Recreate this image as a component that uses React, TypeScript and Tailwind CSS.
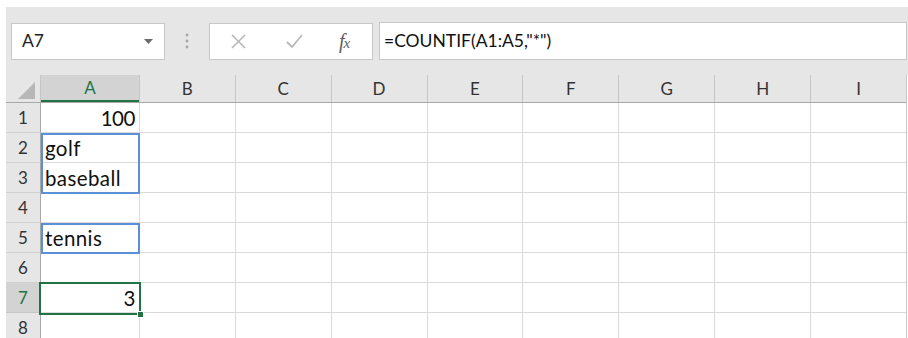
import React from 'react';

const COLS = ['B', 'C', 'D', 'E', 'F', 'G', 'H', 'I'];
const ROWS = [1, 2, 3, 4, 5, 6, 7, 8];

const CELL_A: Record<number, { text: string; right?: boolean }> = {
  1: { text: '100', right: true },
  2: { text: 'golf' },
  3: { text: 'baseball' },
  5: { text: 'tennis' },
  7: { text: '3', right: true },
};

const FONT = { fontFamily: 'Lato, "Open Sans", sans-serif' };

export default function App() {
  return (
    <div className="w-[908px] h-[338px] bg-white overflow-hidden pt-[7px] pl-[6px]" style={FONT}>
      {/* Formula bar */}
      <div className="h-[68px] w-[902px] bg-[#e6e6e6] flex items-center pl-[5px]">
        <div className="w-[154px] h-[37px] bg-white border border-[#c8c8c8] flex items-center justify-between pl-[10px] pr-[11px]">
          <span className="text-[17.5px] text-[#222]">A7</span>
          <svg width="9" height="5" viewBox="0 0 9 5">
            <path d="M0 0h9L4.5 5z" fill="#6a6a6a" />
          </svg>
        </div>
        <div className="w-[44px] flex justify-center">
          <svg width="4" height="16" viewBox="0 0 4 16">
            <circle cx="2" cy="2" r="1.4" fill="#a6a6a6" />
            <circle cx="2" cy="8" r="1.4" fill="#a6a6a6" />
            <circle cx="2" cy="14" r="1.4" fill="#a6a6a6" />
          </svg>
        </div>
        <div className="w-[164px] h-[37px] bg-white border border-[#c8c8c8] flex items-center">
          <svg className="ml-[21px]" width="15" height="15" viewBox="0 0 15 15">
            <path d="M1 1l13 13M14 1L1 14" stroke="#b8b8b8" strokeWidth="1.6" fill="none" />
          </svg>
          <svg className="ml-[40px]" width="17" height="15" viewBox="0 0 17 15">
            <path d="M1 8l5 5L16 1" stroke="#b8b8b8" strokeWidth="1.8" fill="none" />
          </svg>
          <span
            className="ml-[36px] text-[20px] italic text-[#5e5e5e] tracking-[-1px] leading-none"
            style={{ fontFamily: '"Liberation Serif", serif' }}
          >
            f<span className="text-[15px]">x</span>
          </span>
        </div>
        <div className="ml-[6px] w-[528px] h-[38px] bg-white border border-[#c8c8c8] flex items-center pl-[4px]">
          <span className="text-[17.5px] text-[#111]">=COUNTIF(A1:A5,"*")</span>
        </div>
      </div>

      {/* Grid */}
      <div className="relative w-[901px] border-r border-[#c8c8c8]">
        {/* Column headers */}
        <div className="flex h-[28px] bg-[#e6e6e6] border-b border-[#a8a8a8]">
          <div className="w-[35px] flex items-end justify-end pr-[5px] pb-[3px] border-r border-[#c6c6c6]">
            <svg width="17" height="17" viewBox="0 0 17 17">
              <path d="M17 0v17H0z" fill="#b7b7b7" />
            </svg>
          </div>
          <div className="w-[98px] flex items-center justify-center bg-[#d3d3d3] border-b-2 border-[#217346] text-[17px] text-[#217346]">
            A
          </div>
          {COLS.map((c) => (
            <div
              key={c}
              className="w-[96px] flex items-center justify-center border-l border-[#c6c6c6] text-[17px] text-[#333]"
            >
              {c}
            </div>
          ))}
        </div>

        {/* Rows */}
        {ROWS.map((r) => (
          <div key={r} className="flex h-[30px]">
            <div
              className={`w-[35px] flex items-center justify-center border-r border-b text-[17px] ${
                r === 7 ? 'bg-[#d3d3d3] text-[#217346] border-r-[#a8a8a8] border-b-[#c6c6c6]' : 'bg-[#e6e6e6] text-[#333] border-r-[#a8a8a8] border-b-[#d0d0d0]'
              }`}
            >
              {r}
            </div>
            <div
              className={`w-[98px] flex items-end pb-[1px] px-[4px] border-b border-[#dadada] text-[20.5px] leading-[26px] text-[#111] ${
                CELL_A[r]?.right ? 'justify-end tracking-[-0.5px]' : 'justify-start tracking-[0.4px]'
              }`}
            >
              {CELL_A[r]?.text}
            </div>
            {COLS.map((c) => (
              <div key={c} className="w-[96px] border-l border-b border-[#dadada]" />
            ))}
          </div>
        ))}

        {/* Range highlights */}
        <div className="absolute left-[35px] top-[58px] w-[99px] h-[61px] border-2 border-[#5b90d8]" />
        <div className="absolute left-[35px] top-[148px] w-[99px] h-[31px] border-2 border-[#5b90d8]" />

        {/* Active cell */}
        <div className="absolute left-[33px] top-[207px] w-[102px] h-[33px] border-2 border-[#217346]" />
        <div className="absolute left-[131px] top-[236px] w-[7px] h-[7px] bg-[#217346] border border-white" />
      </div>
    </div>
  );
}
